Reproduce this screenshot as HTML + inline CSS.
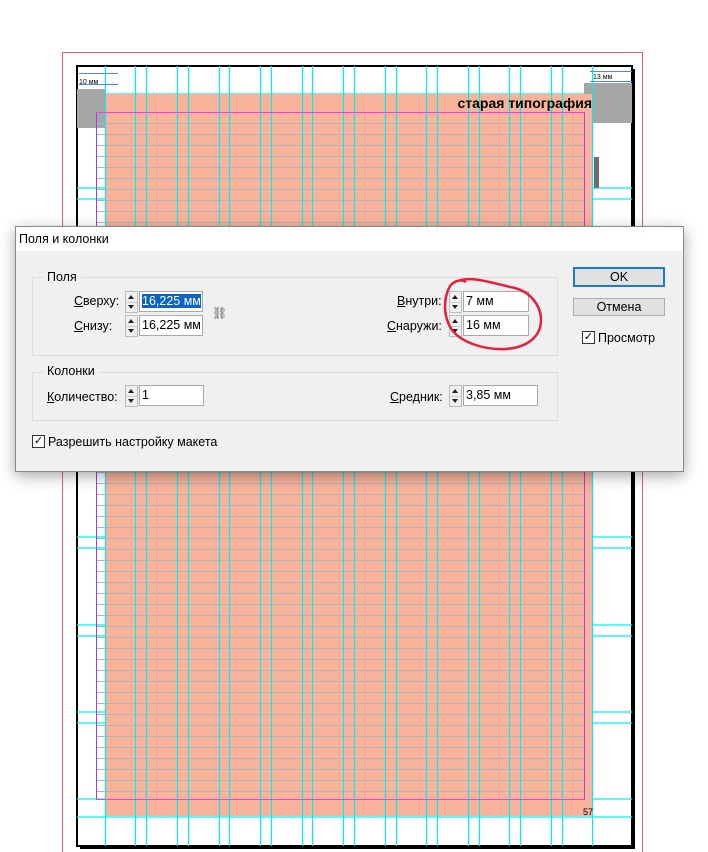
<!DOCTYPE html>
<html><head><meta charset="utf-8"><style>
body{margin:0;width:708px;height:852px;background:#fff;position:relative;overflow:hidden;font-family:"Liberation Sans",sans-serif}
svg{position:absolute;left:0;top:0}
.dlg{position:absolute;left:15px;top:226px;width:667px;height:244px;background:#f0f0f0;border:1px solid #8a8a8a;box-shadow:0 4px 14px rgba(0,0,0,.35);font-size:12.5px;color:#000}
.tb{position:absolute;left:0;top:0;width:667px;height:24px;background:#fff}
.tb span{position:absolute;left:3px;top:5px}
.a{position:absolute;white-space:nowrap}
.grp{position:absolute;border:1px solid #dcdcdc}
.gl{position:absolute;background:#f0f0f0;padding:0 4px}
.sp{position:absolute;width:11px;height:20px;border:1px solid #bcbcbc;background:#f0f0f0}
.sp:before{content:"";position:absolute;left:2px;top:3px;border:3px solid transparent;border-bottom:4px solid #222;border-top:0}
.sp:after{content:"";position:absolute;left:2px;bottom:3px;border:3px solid transparent;border-top:4px solid #222;border-bottom:0}
.sp i{position:absolute;left:0;right:0;top:10px;border-top:1px solid #ccc}
.in{position:absolute;height:19px;border:1px solid #a9a9a9;background:#fff;line-height:19px;padding-left:2px;font-size:12.5px;white-space:nowrap;overflow:hidden}
.btn{position:absolute;width:90px;height:16px;background:#e1e1e1;border:1px solid #adadad;text-align:center;line-height:16px}
.cb{position:absolute;width:11px;height:11px;border:1px solid #333;background:#fff;font-size:11px;line-height:11px;text-align:center}
u{text-decoration:underline}
</style></head><body>
<svg width="708" height="852">
<rect x="62.5" y="52.5" width="580" height="820" fill="none" stroke="#e8606b" stroke-width="1"/>
<rect x="80" y="69" width="555" height="780" fill="#000"/>
<rect x="77" y="66" width="555" height="780" fill="#fff" stroke="#000" stroke-width="2"/>
<g stroke="#00f0f0" stroke-width="1.2">
<line x1="77" x2="632" y1="94" y2="94"/><line x1="77" x2="632" y1="112" y2="112"/>
<line x1="77" x2="632" y1="188" y2="188"/><line x1="77" x2="632" y1="199" y2="199"/>
<line x1="77" x2="632" y1="537" y2="537"/><line x1="77" x2="632" y1="548" y2="548"/>
<line x1="77" x2="632" y1="625" y2="625"/><line x1="77" x2="632" y1="636" y2="636"/>
<line x1="77" x2="632" y1="712" y2="712"/><line x1="77" x2="632" y1="723" y2="723"/>
<line x1="77" x2="632" y1="799" y2="799"/><line x1="77" x2="632" y1="817" y2="817"/>
</g>
<rect x="77" y="89" width="28" height="39" fill="#a6a6a6"/>
<rect x="584" y="83" width="48" height="40" fill="#a6a6a6"/>
<rect x="105" y="94" width="487" height="722" fill="#f9b39b"/>
<g stroke="#b4b4b4" stroke-width="1">
<line x1="96" x2="584" y1="123.5" y2="123.5"/><line x1="96" x2="584" y1="134.5" y2="134.5"/><line x1="96" x2="584" y1="145.5" y2="145.5"/><line x1="96" x2="584" y1="156.5" y2="156.5"/><line x1="96" x2="584" y1="167.5" y2="167.5"/><line x1="96" x2="584" y1="178.5" y2="178.5"/><line x1="96" x2="584" y1="189.5" y2="189.5"/><line x1="96" x2="584" y1="200.5" y2="200.5"/><line x1="96" x2="584" y1="211.5" y2="211.5"/><line x1="96" x2="584" y1="222.5" y2="222.5"/>
<line x1="96" x2="584" y1="472.5" y2="472.5"/><line x1="96" x2="584" y1="483.5" y2="483.5"/><line x1="96" x2="584" y1="494.5" y2="494.5"/><line x1="96" x2="584" y1="505.5" y2="505.5"/><line x1="96" x2="584" y1="516.5" y2="516.5"/><line x1="96" x2="584" y1="527.5" y2="527.5"/><line x1="96" x2="584" y1="538.5" y2="538.5"/><line x1="96" x2="584" y1="549.5" y2="549.5"/><line x1="96" x2="584" y1="560.5" y2="560.5"/><line x1="96" x2="584" y1="571.5" y2="571.5"/><line x1="96" x2="584" y1="582.5" y2="582.5"/><line x1="96" x2="584" y1="593.5" y2="593.5"/><line x1="96" x2="584" y1="604.5" y2="604.5"/><line x1="96" x2="584" y1="615.5" y2="615.5"/><line x1="96" x2="584" y1="626.5" y2="626.5"/><line x1="96" x2="584" y1="637.5" y2="637.5"/><line x1="96" x2="584" y1="648.5" y2="648.5"/><line x1="96" x2="584" y1="659.5" y2="659.5"/><line x1="96" x2="584" y1="670.5" y2="670.5"/><line x1="96" x2="584" y1="681.5" y2="681.5"/><line x1="96" x2="584" y1="692.5" y2="692.5"/><line x1="96" x2="584" y1="703.5" y2="703.5"/><line x1="96" x2="584" y1="714.5" y2="714.5"/><line x1="96" x2="584" y1="725.5" y2="725.5"/><line x1="96" x2="584" y1="736.5" y2="736.5"/><line x1="96" x2="584" y1="747.5" y2="747.5"/><line x1="96" x2="584" y1="758.5" y2="758.5"/><line x1="96" x2="584" y1="769.5" y2="769.5"/><line x1="96" x2="584" y1="780.5" y2="780.5"/><line x1="96" x2="584" y1="791.5" y2="791.5"/>
</g>
<g stroke="#00f0f0" stroke-width="1.2">
<line x1="105.5" x2="105.5" y1="66" y2="846"/><line x1="135.5" x2="135.5" y1="66" y2="846"/><line x1="146.5" x2="146.5" y1="66" y2="846"/><line x1="177.5" x2="177.5" y1="66" y2="846"/><line x1="188.5" x2="188.5" y1="66" y2="846"/><line x1="219.5" x2="219.5" y1="66" y2="846"/><line x1="229.5" x2="229.5" y1="66" y2="846"/><line x1="260.5" x2="260.5" y1="66" y2="846"/><line x1="271.5" x2="271.5" y1="66" y2="846"/><line x1="302.5" x2="302.5" y1="66" y2="846"/><line x1="312.5" x2="312.5" y1="66" y2="846"/><line x1="343.5" x2="343.5" y1="66" y2="846"/><line x1="354.5" x2="354.5" y1="66" y2="846"/><line x1="385.5" x2="385.5" y1="66" y2="846"/><line x1="396.5" x2="396.5" y1="66" y2="846"/><line x1="426.5" x2="426.5" y1="66" y2="846"/><line x1="437.5" x2="437.5" y1="66" y2="846"/><line x1="468.5" x2="468.5" y1="66" y2="846"/><line x1="479.5" x2="479.5" y1="66" y2="846"/><line x1="509.5" x2="509.5" y1="66" y2="846"/><line x1="520.5" x2="520.5" y1="66" y2="846"/><line x1="551.5" x2="551.5" y1="66" y2="846"/><line x1="562.5" x2="562.5" y1="66" y2="846"/><line x1="592.5" x2="592.5" y1="66" y2="846"/>
</g>
<line x1="96.5" x2="96.5" y1="112" y2="799" stroke="#9a3cf0"/>
<line x1="584.5" x2="584.5" y1="112" y2="799" stroke="#b03cf0"/>
<line x1="96" x2="585" y1="112.5" y2="112.5" stroke="#f040e0"/>
<line x1="96" x2="585" y1="799.5" y2="799.5" stroke="#f040e0"/>
<g stroke="#4a8af0"><line x1="79" x2="118" y1="73.5" y2="73.5"/><line x1="79" x2="118" y1="84.5" y2="84.5"/><line x1="590" x2="632" y1="71.5" y2="71.5"/><line x1="590" x2="632" y1="81.5" y2="81.5"/></g>
<text x="79" y="84" font-size="7" font-family="Liberation Sans">10 мм</text>
<text x="593" y="79" font-size="7" font-family="Liberation Sans">13 мм</text>
<text x="592" y="108" font-size="14" font-weight="bold" text-anchor="end" font-family="Liberation Sans">старая типография</text>
<rect x="594" y="157" width="5" height="31" fill="#6e6e6e"/>
<text x="583" y="815" font-size="9" font-family="Liberation Sans">57</text>
</svg>
<div class="dlg">
<div class="tb"><span>Поля и колонки</span></div>
<div class="grp" style="left:16px;top:50px;width:524px;height:77px"></div>
<div class="gl" style="left:27px;top:43px">Поля</div>
<div class="a" style="left:58px;top:67px"><u>С</u>верху:</div>
<div class="sp" style="left:109px;top:64px"><i></i></div>
<div class="in" style="left:123px;top:64px;width:60px"><span style="background:#0a64c8;color:#fff">16,225 мм</span></div>
<div class="a" style="left:58px;top:92px"><u>С</u>низу:</div>
<div class="sp" style="left:109px;top:88px"><i></i></div>
<div class="in" style="left:123px;top:88px;width:60px">16,225 мм</div>
<div class="a" style="left:196px;top:79px;font-size:12px;color:#555">⛓</div>
<div class="a" style="left:381px;top:67px"><u>В</u>нутри:</div>
<div class="sp" style="left:433px;top:64px"><i></i></div>
<div class="in" style="left:447px;top:64px;width:62px">7 мм</div>
<div class="a" style="left:371px;top:92px"><u>С</u>наружи:</div>
<div class="sp" style="left:433px;top:88px"><i></i></div>
<div class="in" style="left:447px;top:88px;width:62px">16 мм</div>
<div class="grp" style="left:16px;top:145px;width:524px;height:47px"></div>
<div class="gl" style="left:27px;top:137px">Колонки</div>
<div class="a" style="left:31px;top:163px"><u>К</u>оличество:</div>
<div class="sp" style="left:109px;top:158px"><i></i></div>
<div class="in" style="left:123px;top:158px;width:61px">1</div>
<div class="a" style="left:374px;top:163px"><u>С</u>редник:</div>
<div class="sp" style="left:433px;top:158px"><i></i></div>
<div class="in" style="left:447px;top:158px;width:71px">3,85 мм</div>
<div class="cb" style="left:16px;top:208px">✓</div>
<div class="a" style="left:32px;top:208px">Разрешить настройку макета</div>
<div class="btn" style="left:557px;top:40px;border:2px solid #1a7ad4;width:88px">OK</div>
<div class="btn" style="left:557px;top:71px">Отмена</div>
<div class="cb" style="left:566px;top:104px">✓</div>
<div class="a" style="left:582px;top:104px">Просмотр</div>
</div>
<svg width="708" height="852" style="pointer-events:none">
<path d="M458 281 C470 276 490 282 510 287 C530 290 540 305 541 318 C542 338 525 348 505 349 C485 350 462 343 452 330 C442 315 444 297 450 286 C455 280 462 279 466 282" fill="none" stroke="#e4203c" stroke-width="2.5"/>
</svg>
</body></html>
